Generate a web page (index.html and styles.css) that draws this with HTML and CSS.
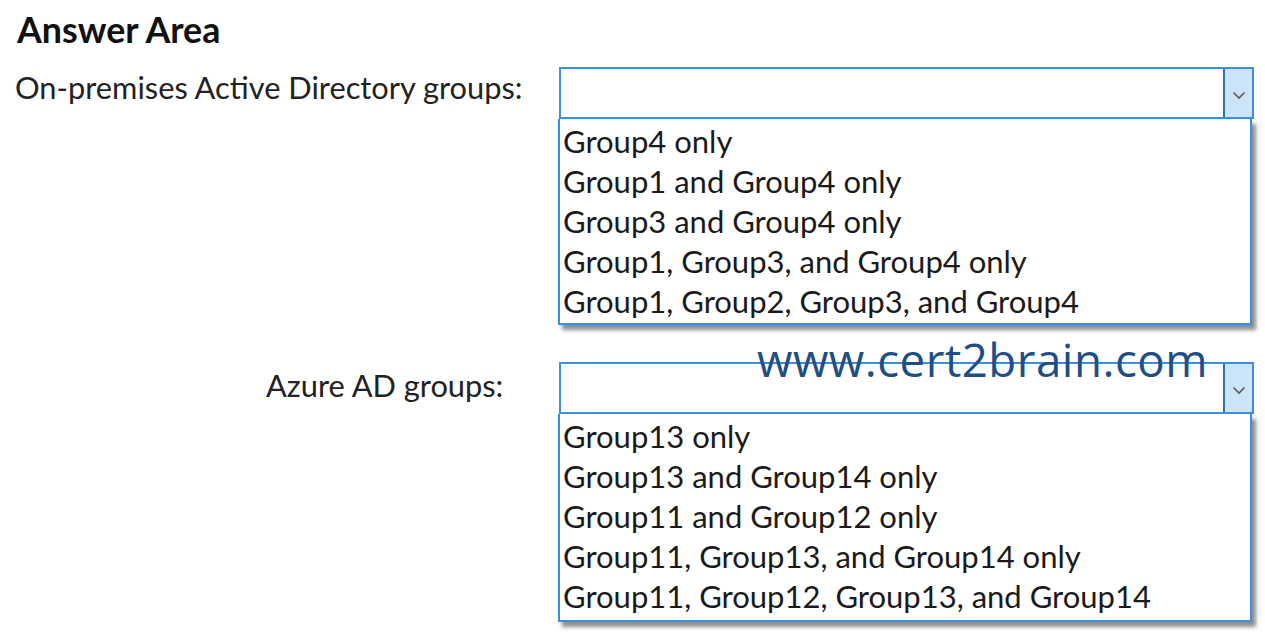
FILE: index.html
```html
<!DOCTYPE html>
<html>
<head>
<meta charset="utf-8">
<link rel="stylesheet" href="styles.css">
</head>
<body>
<div class="page">
  <h1 class="title">Answer Area</h1>
  <div class="row row-first">
    <div class="label label-first">On-premises Active Directory groups:</div>
    <div class="dropdown">
      <div class="select">
        <div class="select-field"></div>
        <div class="select-btn">
          <svg width="14" height="9" viewBox="0 0 14 9"><path d="M1.5 1.5 L7 7 L12.5 1.5" fill="none" stroke="#5a5a5a" stroke-width="1.6"/></svg>
        </div>
      </div>
      <ul class="options">
        <li>Group4 only</li>
        <li>Group1 and Group4 only</li>
        <li>Group3 and Group4 only</li>
        <li>Group1, Group3, and Group4 only</li>
        <li>Group1, Group2, Group3, and Group4</li>
      </ul>
    </div>
  </div>
  <div class="row row-second">
    <div class="label label-second">Azure AD groups:</div>
    <div class="dropdown">
      <div class="select">
        <div class="select-field"></div>
        <div class="select-btn">
          <svg width="14" height="9" viewBox="0 0 14 9"><path d="M1.5 1.5 L7 7 L12.5 1.5" fill="none" stroke="#5a5a5a" stroke-width="1.6"/></svg>
        </div>
      </div>
      <ul class="options">
        <li>Group13 only</li>
        <li>Group13 and Group14 only</li>
        <li>Group11 and Group12 only</li>
        <li>Group11, Group13, and Group14 only</li>
        <li>Group11, Group12, Group13, and Group14</li>
      </ul>
    </div>
    <div class="watermark">www.cert2brain.com</div>
  </div>
</div>
</body>
</html>
```
FILE: styles.css
```css
* { box-sizing: border-box; }
html, body { margin: 0; padding: 0; background: #fff; }
body { font-family: Lato, "Open Sans", sans-serif; color: #1a1a1a; }
.page { width: 1265px; height: 636px; overflow: hidden; padding: 10px 0 0 0; }
.title { margin: 0 0 0 17px; font-size: 35.8px; font-weight: 700; line-height: 40px; color: #111; }
.row { display: flex; align-items: flex-start; position: relative; }
.row-first { margin-top: 17px; }
.row-second { margin-top: 37px; }
.label { font-size: 30.8px; line-height: 42px; color: #222; }
.label-first { width: 559px; padding-left: 15px; }
.label-second { width: 559px; padding-left: 266px; padding-top: 3px; }
.dropdown { width: 695px; }
.select { display: flex; height: 52px; border: 2px solid #3b8ee0; background: #fff; }
.select-field { flex: 1; }
.select-btn { width: 29px; background: #cce4f7; border-left: 2px solid #2a72b8; display: flex; align-items: center; justify-content: center; padding-top: 4px; }
.options { list-style: none; margin: 0 2px 0 -1px; padding: 2px 0 4px 3px; border: 2px solid #3b8ee0; border-top: none; box-shadow: 4px 5px 4px rgba(0,0,0,0.45); background: #fff; }
.options li { font-size: 31px; line-height: 40px; height: 40px; color: #1a1a1a; white-space: nowrap; }
.row-first .options { padding-bottom: 2px; }
.watermark { position: absolute; left: 757px; top: -33px; font-family: "Open Sans", sans-serif; font-size: 45.7px; line-height: 60px; color: #1f4e86; letter-spacing: 0.5px; }
```
